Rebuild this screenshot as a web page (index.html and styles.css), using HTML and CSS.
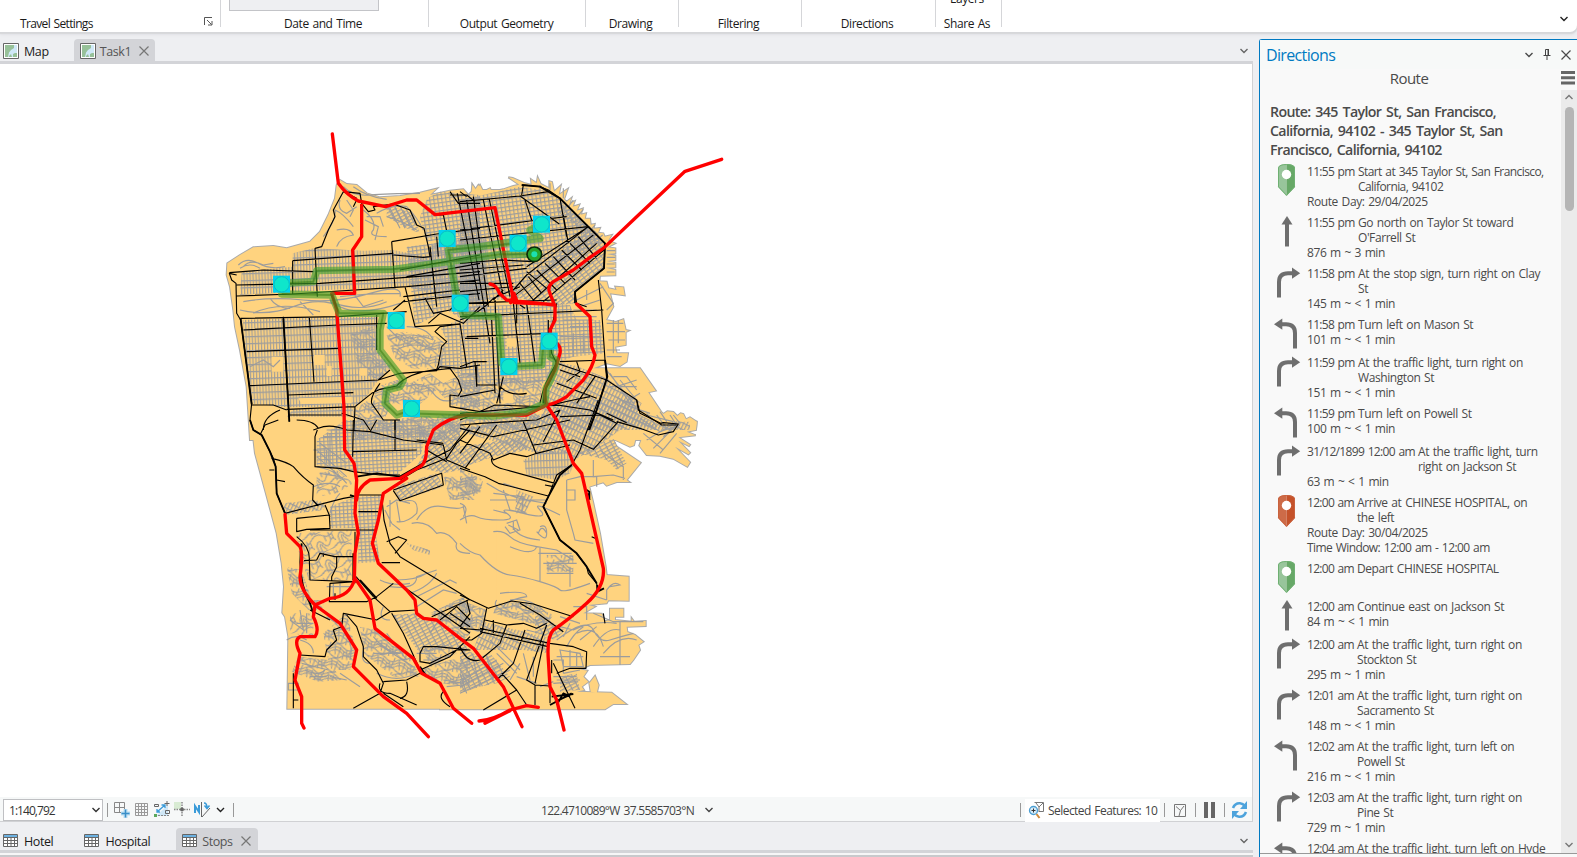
FILE: index.html
```html
<!DOCTYPE html>
<html lang="en">
<head>
<meta charset="utf-8">
<title>Route map</title>
<link rel="stylesheet" href="styles.css">
</head>
<body>
<svg class="defs" width="0" height="0">
  <defs>
    <symbol id="i-up" viewBox="0 0 32 32"><path class="ic" d="M17 31.500V8" /><path class="icf" d="M17 1l5.500 8.500h-11z"/></symbol>
    <symbol id="i-right" viewBox="0 0 32 32"><path class="ic" d="M9 31.500V16Q9 7.300 18 7.300H23"/><path class="icf" d="M22 1.600l8.200 5.700-8.200 5.500z"/></symbol>
    <symbol id="i-left" viewBox="0 0 32 32"><path class="ic" d="M25 31.500V16Q25 7.300 16 7.300H11"/><path class="icf" d="M12.300 1.600L4 7.300l8.300 5.500z"/></symbol>
    <symbol id="i-start" viewBox="0 0 32 32"><path fill="#98c59b" d="M8 3.500Q9 0 16.500 0V32L8 23z"/><path fill="#67a867" d="M16.500 0Q24 0 25 3.500V23L16.500 32z"/><path fill="none" stroke="#6fb072" d="M8.500 22.800V3.800Q9.500.500 16.500.500t8 3.300v19L16.500 31.300z"/><circle cx="16.500" cy="10.500" r="4.700" fill="#fff"/></symbol>
    <symbol id="i-stop" viewBox="0 0 32 32"><path fill="#cd6b48" d="M8 3.500Q9 0 16.500 0V32L8 23z"/><path fill="#c5522a" d="M16.500 0Q24 0 25 3.500V23L16.500 32z"/><path fill="none" stroke="#c9623e" d="M8.500 22.800V3.800Q9.500.500 16.500.500t8 3.300v19L16.500 31.300z"/><circle cx="16.500" cy="10.500" r="4.700" fill="#fff"/></symbol>
    <symbol id="i-map" viewBox="0 0 16 16"><path fill="#fff" stroke="#666" d="M.500.500h15v15H.500z"/><path fill="#cfe8f7" d="M2 2h12v12H2z"/><path fill="#97c199" d="M2 2h9v3L8 7 6 9.500 5 14H2zM10 14v-3l2-1h2v4zM6 13l2-2 1 3H6z"/></symbol>
    <symbol id="i-table" viewBox="0 0 16 14"><path fill="#fff" stroke="#666" d="M.500.500h14v12H.500z"/><path fill="#6cb1e1" d="M1 1h13v2.500H1z"/><path fill="none" stroke="#666" d="M1 3.500h13M1 6.500h13M1 9.500h13M4.500 4v8.500M8 4v8.500M11.500 4v8.500"/></symbol>
    <symbol id="i-x" viewBox="0 0 10 10"><path fill="none" stroke="currentColor" stroke-width="1.200" d="M.500.500l9 9M9.500.500l-9 9"/></symbol>
    <symbol id="i-chev" viewBox="0 0 8 6"><path fill="none" stroke="currentColor" stroke-width="1.400" d="M.500 1L4 4.500 7.500 1"/></symbol>

    <pattern id="g-west" width="9" height="21" patternUnits="userSpaceOnUse" patternTransform="rotate(-2)"><path class="st" d="M0 2H9M2 0V21"/></pattern>
    <pattern id="g-north" width="12" height="12" patternUnits="userSpaceOnUse" patternTransform="rotate(-8)"><path class="st" d="M0 2H12M2 0V12"/></pattern>
    <pattern id="g-soma" width="16" height="10" patternUnits="userSpaceOnUse" patternTransform="rotate(-38)"><path class="st" d="M0 2H16M2 0V10"/></pattern>
    <pattern id="g-mission" width="12" height="11" patternUnits="userSpaceOnUse" patternTransform="rotate(-3)"><path class="st" d="M0 2H12M2 0V11"/></pattern>
    <pattern id="g-bay" width="10" height="18" patternUnits="userSpaceOnUse" patternTransform="rotate(26)"><path class="st" d="M0 2H10M2 0V18"/></pattern>
    <pattern id="g-slope" width="10" height="18" patternUnits="userSpaceOnUse" patternTransform="rotate(62)"><path class="st" d="M0 2H10M2 0V18"/></pattern>
    <pattern id="g-hill" width="66" height="44" patternUnits="userSpaceOnUse" patternTransform="rotate(14)"><path class="st" d="M0 8Q16-5 33 8T66 8M0 17Q16 4 33 17T66 17M0 26Q16 13 33 26T66 26M0 36Q20 50 34 36T66 36M8 5L14 34M26 8l-3 32M44 12l8 30M60 0l-6 30M38 20v24"/></pattern>
    <pattern id="g-curl" width="70" height="60" patternUnits="userSpaceOnUse" patternTransform="rotate(-25)"><path class="st" d="M0 10Q20-4 35 12T70 10M6 60V34Q18 12 28 38Q36 54 48 38T66 40M15 60V40Q19 26 23 42L30 56M38 12V32M53 8v26M0 50Q36 70 70 50M62 14v20"/></pattern>

    <g id="land">
      <path d="M20 465L22 430 60 405 100 382 160 378 200 385 235 375 270 365 300 335 325 285 345 235 350 195 360 180 380 192 410 195 440 220 480 232 540 228 600 218 650 206 630 225 690 212 730 208 745 225 755 215 757 195 765 210 775 195 785 210 900 210V960H90L80 800 60 690 45 620 40 570 30 500z"/>
      <path transform="translate(720)" d="M0 225L40 225 38 195 50 212 60 195 70 215 90 205 95 215 130 208 160 198 178 194 145 172 158 174 195 190 215 195 213 178 230 190 233 172 242 192 268 205 268 184 276 186 282 215 302 197 296 225 323 207 312 238 320 245 334 234 328 252 344 244 338 260 358 254 350 272 368 266 362 284 378 280 374 296 390 296 392 314 404 312 400 326 420 324 414 338 430 340 434 350 455 345 444 362 465 370 442 382 466 385 466 400 440 402 466 407V420L440 423 466 428V442L436 443 466 450V466L420 467 418 484 440 485 445 505 470 510 466 500 490 502 494 526 450 520 460 560 438 600 468 606 490 598 497 630 506 632 497 636 497 675 465 680 470 700 504 700 500 725 480 738 440 730 400 745 540 745 587 812 550 820 548 840 558 865 582 862 595 870 610 882 622 874 640 876 652 888 662 880 670 882 678 898 690 892 710 905 708 925 600 910V960H0z"/>
      <path transform="translate(720 840)" d="M-60-60H540L620 60 710 65 708 90 680 95 707 106 655 112 690 134 687 138 655 122 690 158 685 163 645 140 690 187 682 200 640 176 600 167 560 165 538 137 548 108 528 110 522 136 510 140 458 116 470 140 542 188 500 240 508 246 470 246 440 257 430 247 388 260 400 310 420 400 437 500 440 525 506 530V602L445 601 440 610 385 615 405 620 370 640 425 641 435 664 450 660V626H490V650H465V660L515 665V655L522 665 557 663V678L500 680 502 696 525 705 550 725 535 735 540 750 520 780 510 792 390 795 360 808 382 812 370 830 385 845 365 860 372 870 350 875 455 878 498 912 460 912 435 928H-60z"/>
      <path transform="translate(30 900)" d="M60-30H800V866H172L175 650 165 590 157 578 162 500 155 430 140 340 105 210 75 100z"/>
      <path d="M1125 1668l11 27-6 25-18-5-4-25z"/>
    </g>
  </defs>
</svg>

<div class="app">
  <header class="ribbon">
    <div class="group g1"><span>Travel Settings</span>
      <svg class="launch" width="9" height="9" viewBox="0 0 9 9"><path fill="none" stroke="#555" d="M.500 8V.500H8M3 3l4.500 4.500M8 4v4H4"/></svg></div>
    <div class="group g2"><div class="datebox"></div><span>Date and Time</span></div>
    <div class="group g3"><span>Output Geometry</span></div>
    <div class="group g4"><span>Drawing</span></div>
    <div class="group g5"><span>Filtering</span></div>
    <div class="group g6"><span>Directions</span></div>
    <div class="group g7"><em>Layers</em><span>Share As</span></div>
    <svg class="collapse" width="8" height="6"><use href="#i-chev"/></svg>
  </header>

  <div class="work">
    <main class="left">
      <nav class="tabs">
        <div class="tab"><svg width="16" height="16"><use href="#i-map"/></svg><span>Map</span></div>
        <div class="tab active t-task"><svg width="16" height="16"><use href="#i-map"/></svg><span>Task1</span><svg class="x" width="10" height="10"><use href="#i-x"/></svg></div>
        <svg class="more" width="8" height="6"><use href="#i-chev"/></svg>
      </nav>
      <section class="mapframe">
        <svg class="map" width="1252" height="734" viewBox="-660 -168 3756 2202">
          <use href="#land" class="shore"/><use href="#land" class="ground"/>

          <!-- local street grids -->
          <g>
            <path fill="url(#g-west)" d="M65 455L218 440V400L280 385 430 392 520 390 620 410 640 370 780 340V560L560 500 320 510 60 525z"/>
            <path fill="url(#g-west)" d="M68 600L350 590 470 590 475 690 510 740 475 780 440 830 410 860 200 862 92 850z"/>
            <path fill="url(#g-north)" d="M622 235L660 215 780 225V340L620 365 600 290z"/>
            <path fill="url(#g-hill)" d="M390 640L460 620 475 700 515 740 480 780 420 760zM500 645l50-10 100 15 25 20-10 80-90-5-50-30-15-40zM470 800l60-20 40 10 60-30 40 30 60-30 50 0v100l-80 0-50-50-60 50-70-10-30 50-40-10z"/>
            <path fill="url(#g-slope)" d="M500 255L580 280 600 340 560 325 500 290z"/>
            <path fill="url(#g-north)" d="M560 380L800 350V610L730 600 680 570 600 610 585 615z"/>
            <path fill="url(#g-mission)" d="M660 620L720 600V820L730 790 700 750 655 745 680 660z"/>
            <path fill="url(#g-west)" d="M220 868L400 862V890L200 890z"/>
            <path fill="url(#g-hill)" d="M400 870L460 830 480 900 720 880V960H400z"/>
          </g>
          <g transform="translate(720)">
            <path fill="url(#g-north)" d="M0 240L180 200 260 212 310 240 430 365 180 500 150 540H0z"/>
            <path fill="url(#g-soma)" d="M150 530L390 320 440 375 432 445 350 510 345 550 290 555z"/>
            <path fill="url(#g-mission)" d="M0 560L290 550 330 555 350 600 420 600 435 700 340 710 300 725 250 790H0z"/>
            <path fill="url(#g-bay)" d="M260 760L300 728 350 738 440 775 545 850 530 880 600 915 640 905 690 905 690 930H240z"/>
            <path fill="url(#g-soma)" d="M300 245l120 100-20 10-110-80z"/>
            <path fill="url(#g-hill)" d="M0 790L100 780 250 770 240 840V930H0z"/>
          </g>
          <g transform="translate(720 840)">
            <path fill="url(#g-bay)" d="M-20 90L260 40 350 0 520 0 540 50 600 85 500 75 400 150 340 180 320 160 230 160z"/>
            <path fill="url(#g-soma)" d="M0 140L200 110 200 150 100 170 0 205z"/>
            <path fill="url(#g-west)" d="M190 180L240 155 330 150 345 185 330 220 290 240 200 225z"/>
            <path fill="url(#g-slope)" d="M350 160L460 115 500 190 470 210 440 180 400 170z"/>
            <path fill="url(#g-hill)" d="M0 205L70 240 60 280 0 290zM260 465h80v50h-80zM0 600L80 630 70 700 0 680zM110 610l90-5 80 40-20 30-50-5-110-30z"/>
            <path fill="url(#g-bay)" d="M70 665L270 715 265 760 190 750 40 750zM170 270l50 20-25 50-30 0z"/>
            <path fill="url(#g-slope)" d="M0 740L60 770 90 760 150 830 110 850 60 860 0 880zM300 830l50-10 10 50-60 5zM225 640l50 25 40 25-30 30-60-20z"/>
          </g>
          <g transform="translate(30 900)">
            <path fill="url(#g-mission)" d="M260 60L345 0H560L585 40 575 100 500 165 390 160 260 135z"/>
            <path fill="url(#g-soma)" d="M600 60L690 0V150L640 160 560 140zM490 200l130-40 20 40-130 42z"/>
            <path fill="url(#g-hill)" d="M560 0l130 0-90 80-30-20zM640 170l100 0v70l-80 0z"/>
            <path fill="url(#g-bay)" d="M160 250L255 240 290 250 280 270 165 285zM530 370l70 20v15l-50-15z"/>
            <path fill="url(#g-mission)" d="M385 230L455 225 435 330 450 425 385 430zM300 260l75-30v95l-75 0z"/>
            <path fill="url(#g-curl)" d="M200 340l165-10v150l-130 0-30-90zM180 580l70 0v70l-70-10zM260 160l60-10 50 40-50 30-60 10z"/>
            <path fill="url(#g-hill)" d="M170 440l45 10 30 90 40 0-10 30-40 0-50-50zM205 710l90 10 40 60-70 5-80-30zM280 640l70-60 30 120-20 50-60 0z"/>
            <path fill="url(#g-hill)" d="M390 620l45 10 100 70 35 70-80 0-90-70zM560 750l100-30 60-10v90l-90-10z"/>
            <path fill="url(#g-slope)" d="M485 585L560 580 640 610 720 690 640 680 570 700z"/>
            <path fill="url(#g-hill)" d="M580 690l70-20 30 30-80 40zM600 580l100-50 40 90-40 40z"/>
          </g>

          <!-- parks inside the grids -->
          <path class="park" d="M155 710h35v45h-35zM282 705h32v30h-32zM320 738h15v30h-15zM418 745h24v22h-24zM235 835l160-5v20l-150 2zM860 655h30v25h-30zM850 820h30v30h-30z"/>

          <!-- winding local roads -->
          <g class="minor">
            <path d="M55 435Q80 410 115 430T195 440M60 445Q90 425 120 445M70 440Q90 415 130 435L160 430M70 545Q150 530 250 540T450 520 540 530M60 570Q140 590 220 560T360 560 540 550M100 580Q180 540 300 575M330 545Q420 580 500 545M360 530Q440 520 540 520M240 545l40 40M150 535q20 30 60 30M400 520l30 40 60-20M370 200Q400 230 450 225T600 220M400 200Q440 230 500 238M310 350Q350 300 345 270 370 280 400 320M350 330Q390 320 400 345 360 350 350 380M360 240q-10 30 20 40l30-20M430 270Q470 300 460 330 440 350 500 350M435 300l40 20-10 40M470 280Q520 250 560 260 590 290 610 330M510 265l30 60M525 260l30 65M540 258l30 60M555 262l30 50M500 290Q540 300 590 330M440 290l40 0 10 30M380 240l20 30-10 20M500 620l40 40 30-10 40 30"/>
            <path d="M90 740l40-20 30 20 20-20M510 660Q560 630 640 660M530 690Q580 660 650 690M560 620q60 0 80 40M690 810q40 30 60 10M560 800q50-20 80 20t80 10"/>
          </g>
          <g class="minor" transform="translate(720)">
            <path d="M350 540L430 500M360 560l60-20M420 490l40 60-20 20M380 510v30M440 610l50 0M440 635h55M445 660h50M440 690h40M440 710h45M460 600v100M475 600v70M435 745L520 850M460 770h40l30 40M470 800l60-20M470 830l40 30 60 20M560 885l80 20M600 875l20 30M640 885l20 25M300 650h120M310 600h90M320 690h70M340 640v70M370 640v60M180 790q-30-30-30 10M20 770q40-20 40 10M450 760l60 90M480 780l50 60M450 800h80M490 850l50-30M340 590h70M340 570h70M330 620h80"/>
            <path d="M240 195V215M270 190v20M310 205v30M340 240l-15 20M370 268l-15 18M440 392h26M440 412h26M440 432h24M440 456h24M405 315l-15 18M428 345l-18 14"/>
          </g>
          <g class="minor" transform="translate(720 840)">
            <path d="M0 360Q30 340 50 350T120 360 140 340 190 340 240 330 300 345M0 310Q30 320 10 350M0 430Q30 460 60 465 110 520 150 525T240 545 300 570 390 550M100 395Q130 390 150 410T230 440 290 450 340 480M140 370l30-10 10 30-30 10-15-20M160 365v25M145 375l30 15M150 440Q220 470 230 440M240 380q20-10 20 20t-30-5M235 400q10-30 25 0M130 270L150 330 200 340M100 280l90 10-5 50M130 250l60 20M320 240V330L340 400 345 420 400 430M320 270h25v30h-25M320 240l40-10 50 0v30M240 440Q240 500 240 545M235 460h100M250 490h100M260 520h80M330 500v60M100 330l40 10M160 385q20 30 80 35M80 250q60 40 120 50l60 10M90 300h170M540 55l60 40 60-20M560 40l30 40M590 45l30 40M630 45l20 30"/>
            <path d="M120 580Q200 570 200 590 140 600 130 620M150 600Q210 590 260 640M170 620q40 20 60 10M110 600q-20 30 60 40M300 680L340 690Q400 660 470 670M290 720Q380 650 400 690T450 720 520 700M300 750l60 10 10 40-60 0zM330 750v50M350 760v40M290 770h80M400 740Q440 680 480 690M430 760Q480 700 530 720M420 770h90M280 780h30v40M370 680q-30 20-50 60M480 665v130M440 600V570Q460 540 480 555L450 560M380 580l60 20M560 120l90-55M580 145l80-80M550 100l60 50M610 110l30-30M600 160l50-60M340 620h40v40M400 640l60 25h90M400 180v50l60-5 35 10M420 150q50 40 70 50v40M300 650l60 20M330 670l-20 40M310 820l50-10M290 840h70M350 700q60-30 80 40M360 720l50-40"/>
            <path d="M90 720l90 90M0 880L150 810M0 860l130-70M0 845l110-65M20 880l-20-60M60 860l-20-80M100 840l-20-70M190 760l20 80M170 830l60 20M280 830l70 0M280 850l70-5M240 860l40-15M200 690l60 15M110 760l60 60M180 790l-30 50M220 770v60"/>
          </g>
          <g class="minor" transform="translate(30 900)">
            <path d="M520 245Q570 230 560 280 530 310 500 305M560 300Q590 250 640 260T700 260L710 310M545 310Q590 300 620 340 650 330 680 370 670 400 720 400M485 310l25 20M250 200Q300 180 330 200M270 160l60 10M260 140Q320 150 350 190M330 220q-20 20-30 60M260 90l90 80M260 110l60 50M270 70l80 60M480 500Q560 510 560 470L620 450M540 520Q600 500 620 460M560 530L660 480 680 490M500 480q60 0 90-20M560 560l80-50 40 10M600 640l40-60M460 560Q440 600 480 600M180 600l40 30-10-60M170 660Q200 640 230 660M215 730l80 20M225 750q40 20 60 0M240 770h50M350 640q20 40 10 80M430 650q40 50 90 50M440 670l110 70M430 700h80M470 640l60 80M470 260l30-20 40 10M480 240v80M465 270l20 40M500 245l10 60M470 450l60 60M450 480q40 20 90 10"/>
            <path d="M175 790h30v20h-30zM290 30h50M280 50h60M250 90h40v40M300 40v100M320 20v110M560 700h60M580 720h60M400 690q-10 40 20 40M440 760q60 30 120 0M640 780l60 10M650 800l50-5M290 500h70M310 490v50M330 490v40M290 590l30 20M210 660q40 10 40 40M200 610h50M230 580v60M330 760l60 40M300 770l50 10"/>
          </g>

          <!-- arterials -->
          <g class="major">
            <path d="M50 465L28 460 35 480 48 490 50 580 62 600 95 850 90 900M28 458L130 450 280 455M50 495L300 490 520 475 780 455M50 528L220 522 560 500 780 480M218 422V522M218 422L520 400M285 385L292 530M285 385L305 380 325 330 345 290 340 270 370 215 420 220 425 250M370 215L410 235M400 260l10-20M425 250L445 275 465 270 460 260 520 252 570 270 590 315 612 325 625 380 630 410 610 412 520 405M515 365L650 342 780 325M515 365L525 505M648 285L670 285 690 380M690 215l25 35 65 0M712 220l65 320M690 225h50l25 20M630 380L650 560M655 410L650 350M560 470L780 430M540 450L780 405M555 500L585 620 720 612M550 530L720 510M550 545L780 520M780 560L730 610 660 580 625 610M615 535L640 580 690 570 730 530M520 570L555 540"/>
            <path d="M62 600V595L355 590 560 575M70 630L355 615 500 610M80 695L360 685M90 797L475 780 540 760 650 752 660 740 720 745M190 590L208 905M268 590L282 785M205 825L400 818M200 868L405 860 455 820 480 808 530 798M95 855L160 855 200 870M180 870Q130 890 130 930M205 885h160M405 860L402 930M365 880L430 900 450 930M470 580V690M475 780L510 750M480 790Q450 830 455 850L490 900 540 900M530 798Q560 760 650 748L655 735 665 680 680 665 645 635 660 620 720 612M650 750L690 745 715 780 725 810 715 828 690 825 690 860 780 875M720 610L740 740M735 655h40M720 745l60-10M770 735v65M525 900v30"/>
            <path class="thick" d="M62 597L95 853M190 595L208 905"/>
          </g>
          <g class="major" transform="translate(720)">
            <path d="M0 245L180 228 265 215M0 330L210 303 320 290M40 230L85 560M70 240L130 530M88 238L150 530M20 240l70 430M180 228L298 312M195 240L215 300M185 225L190 195 240 200 265 210 300 235 435 370M300 235L320 350M0 215l20 15M0 360L385 320M0 430L120 420 220 425M0 450L190 435M0 470L200 445M0 490L160 490M0 515L160 500M310 285L325 370M200 440L385 320M160 510L200 465 385 320 435 370 432 445 345 515 350 550 380 560M180 490l40 50M205 470l40 50M230 450l60 60M255 430l60 60M280 410l65 70M305 390l60 60M330 370l60 60M355 350l55 65M200 455l60 50M220 540L410 370M160 530L400 345M250 545L432 390M0 600Q60 580 100 535L180 500M100 540l30-30M105 540L120 850M95 600l10 220M160 550L180 730M200 550L225 730M0 590L430 570M20 650L270 640M0 740l40-15 40 0M45 725l5 70 60 0M0 550L290 540M180 555l15 10M170 530v80M265 600v50M290 550L270 650 275 700 290 730M415 480L425 570 435 720 440 775 410 870 385 930M300 725L435 720M290 730Q250 790 240 850M290 730L440 780 530 840 535 870 605 915 650 915M290 790L410 835M350 725l10 30-40 30M300 750l60 20M405 770L350 850M120 800Q150 830 200 820M105 855L240 860M0 880L240 860M260 850L390 870 460 900M250 860L340 840 390 830M0 900L105 855M110 850l20-80M300 890L420 885 470 910M0 830L105 810"/>
            <path class="thick" d="M185 195L240 200 300 235 435 370 432 445 345 515V550M435 720L442 770 410 870 388 930M290 730Q250 800 250 850"/>
          </g>
          <g class="major" transform="translate(720 840)">
            <path d="M0 75L60 70 230 60 300 30M0 85L100 110 330 60M110 75L15 205M60 80L0 160M0 120L90 160 100 180 150 160 200 170 230 160 330 135M190 65L228 160M220 135L340 120 400 148 475 65M250 125L300 30M95 175Q90 200 140 210L285 250M0 205L75 230 115 250 265 288M415 0L360 150 335 195 290 225 265 290 250 320 300 420 350 460 380 500 385 520 410 550 412 565M470 65L540 85 595 105 640 95 655 72 610 68 602 70 540 40 530 0M440 40L500 68M0 585L85 625 155 603 220 612 340 650M180 610L240 645 310 695M60 685L270 730M60 695L265 740M0 685L65 690M20 600L30 640 0 680M80 625L65 700 35 720 0 720M75 660L140 675 190 670 230 685 260 670M140 675L120 730 60 780Q20 790 0 740M195 690L160 790 110 840M100 660v40M260 675Q230 760 200 840L225 855 270 858M250 730L225 850M270 730L340 740 380 755 378 805 330 805 290 820M280 790l65 135M275 780v40M125 820L170 870 200 915M170 870L70 930M225 855V915M270 850v60M430 640l5 30M255 255l25 5M385 280l5 20M395 410l10 5M0 290"/>
            <path class="thick" d="M335 195L300 225 265 290 250 320 300 420 350 460 380 500 410 550M412 555v20l20-10M270 915l65-35M275 890l65-8M290 915l20-35 20 10M285 905l45-20M380 270l8 5v20"/>
          </g>
          <g class="major" transform="translate(30 900)">
            <path d="M60 0L70 30 95 45 120 95 130 115 137 140 140 220 165 280 340 235 370 230M90 45L105 15 145 0M125 115Q170 125 190 140 220 175 250 195L248 240 265 258M118 150h15M140 180l25 5M250 30L265 25Q250 0 200 0M262 30L255 50V140L330 145 370 155 450 165 510 165M265 25Q300 10 350 30L420 35 520 60 640 75 650 120 720 150M420 35L440 0M370 0L368 110M370 95L560 90M495 0V90M720 15L660 90 580 130 510 175M720 30L680 70 650 115 560 150 510 180M590 90L650 125M560 60L640 70M490 210L635 160 640 195 510 242 490 212M385 225L455 225 462 300 480 370 510 410 690 520 720 540M385 275h60M200 295L298 285 300 325 230 328 200 335V295M285 255l15 35M240 330L440 330M375 335V490M200 350Q240 380 238 420L240 480 370 485M222 422L260 420 270 400 315 410 370 410M280 400v10M320 410v30l-15 30 0 15M375 485L300 490 298 545 410 545 440 530 490 490M378 470L430 530 480 575 440 600 340 580 335 620 310 630 320 660 290 690 285 710 210 705M480 575L560 570M485 580L520 640 570 750M470 365L505 350 530 360 495 400M455 428L510 428M520 500L620 570 720 640M605 590L715 540M630 600L680 560 720 600M660 580L720 620M570 700L580 680 620 680 720 690 680 690 600 730 570 725 570 700M570 750L660 710 720 650M350 585L380 620 400 680 400 710 440 750 460 790 450 820 370 865M460 785L530 780 570 760M450 790Q440 820 480 820L560 855M530 785Q540 830 510 835M460 820L520 860M190 760V865M205 840h-15M315 540V520M240 570L300 600M640 815Q620 835 660 860"/>
            <path class="thick" d="M60 0L70 30 95 45 120 95 137 140 140 220 165 280M380 170L440 160 510 170 580 130M215 370Q200 480 240 550L250 580M370 400V480M375 230l-15-5M570 740l20 30M390 480l50 55"/>
          </g>

          <!-- freeways -->
          <g class="freeway">
            <path d="M337 42L355 190Q380 225 415 243L497 260 560 240H590L645 284 825 263 882 548 995 553M425 245V350L398 390 404 520H335L350 570 372 860 374 990 385 1005 402 1030 410 1080 405 1180 415 1240 405 1300 403 1380M1505 118L1395 154 1250 290 1150 385 1110 412 1060 450 1000 485Q980 500 990 520L1005 560V600L990 630 993 660Q1025 670 1020 700L1005 750 978 800Q970 820 980 855M810 492Q830 495 838 520L860 540 1005 555M872 548l10-28 10 28M1070 552L1110 590 1115 680 1125 705Q1120 740 1090 780L1040 830Q1010 850 980 855"/>
            <path d="M980 855Q960 865 920 885L790 885 740 885Q690 890 640 930L620 980Q620 1030 600 1040L540 1075 450 1080Q410 1105 410 1140M980 855L1010 900 1060 1030 1085 1060 1150 1345Q1155 1400 1100 1450T1000 1530Q980 1550 985 1620L990 1700 1010 1740 1032 1830M560 1075L490 1120 475 1200 457 1270 475 1330 560 1410 585 1440 590 1480 610 1495 650 1500 720 1555 760 1585 850 1700 906 1820"/>
            <path d="M405 1375L450 1440 465 1525 580 1615 605 1660 660 1690 700 1765 755 1810M405 1375Q390 1430 330 1435L285 1455M195 1183L200 1240 240 1280Q250 1300 240 1370 240 1410 285 1455L360 1510 410 1590 400 1640 490 1730 560 1780 625 1850M285 1455L280 1490Q300 1530 285 1550L240 1550Q220 1560 240 1600L225 1680 245 1730V1810L252 1824M777 1803Q820 1800 870 1770L920 1757 955 1762M795 1810L870 1772"/>
          </g>

          <!-- solved route -->
          <g class="route">
            <path d="M943 403L840 403 600 437 520 448 290 452 280 485 190 490M185 522L335 525 358 580 490 580 480 630 480 690 550 780 540 800 500 810 495 850 530 885 575 870M560 880L720 885 820 888 920 875 975 850 978 805Q1010 750 1008 720L990 710 992 670M970 675L965 735 870 740 845 730 835 590 730 585 710 530 685 390 780 380 960 355 930 330 960 315"/>
          </g>
          <g class="routecore">
            <path d="M943 403L840 403 600 437 520 448 290 452 280 485 190 490M185 522L335 525 358 580 490 580 480 630 480 690 550 780 540 800 500 810 495 850 530 885 575 870M560 880L720 885 820 888 920 875 975 850 978 805Q1010 750 1008 720L990 710 992 670M970 675L965 735 870 740 845 730 835 590 730 585 710 530 685 390 780 380 895 370"/>
          </g>

          <g class="stop">
            <g transform="translate(185 493)"><path d="M-26-26h51v51h-51z"/><circle r="23"/></g>
            <g transform="translate(682 356)"><path d="M-26-26h51v51h-51z"/><circle r="23"/></g>
            <g transform="translate(529 602)"><path d="M-26-26h51v51h-51z"/><circle r="23"/></g>
            <g transform="translate(721 550)"><path d="M-26-26h51v51h-51z"/><circle r="23"/></g>
            <g transform="translate(575 866)"><path d="M-26-26h51v51h-51z"/><circle r="23"/></g>
            <g transform="translate(895 370)"><path d="M-26-26h51v51h-51z"/><circle r="23"/></g>
            <g transform="translate(965 313)"><path d="M-26-26h51v51h-51z"/><circle r="23"/></g>
            <g transform="translate(988 664)"><path d="M-26-26h51v51h-51z"/><circle r="23"/></g>
            <g transform="translate(867 740)"><path d="M-26-26h51v51h-51z"/><circle r="23"/></g>
          </g>
          <g class="depot" transform="translate(943 403)"><circle r="22"/><circle r="9"/></g>
        </svg>
      </section>

      <footer class="status">
        <div class="scale"><span>1:140,792</span><svg width="8" height="6"><use href="#i-chev"/></svg></div>
        <i class="sep s1"></i>
        <svg class="tools" width="98" height="18" viewBox="0 0 98 18">
          <path fill="none" stroke="#888" d="M.500 1.500h10v10H.500zM5.500 1v11M0 6.500h11"/><path stroke="#b8dcf2" stroke-width="4" d="M11.500 8v9M7 12.500h9"/><path stroke="#3a8fc8" stroke-width="1.500" d="M11.500 8.500v8M7.500 12.500h8"/>
          <path fill="none" stroke="#999" d="M21.500 2.500h12v12h-12zM24.500 2v13M27.500 2v13M30.500 2v13M21 5.500h13M21 8.500h13M21 11.500h13"/>
          <path fill="#cfe7f6" d="M42 15L54 4v11z"/><path stroke="#3a9bd9" stroke-width="1.300" fill="none" d="M43 11l8-7M47.500 4H51v3M43 8v3h3"/><path stroke="#666" fill="none" d="M40.500 3.500h4v2h-4zM50.500 2.500h5M53 0v5M51.500 9.500h4v3h-4z"/><path stroke="#888" stroke-dasharray="2 1" d="M44 14.500h12"/><path fill="#5ca85c" d="M40 13h3v3h-3z"/>
          <path fill="#d8ebd3" d="M60 1h7v7h-7z"/><path stroke="#888" stroke-width="1.500" stroke-dasharray="1.500 1" d="M68 1v15M60 8.500h16"/><circle cx="68" cy="8.500" r="2" fill="#666"/>
          <path fill="none" stroke="#3a9bd9" stroke-width="2" d="M81 12V5l4 6V4"/><path stroke="#666" d="M87.500 1v15M88 16l8-9"/><path fill="none" stroke="#3a9bd9" stroke-width="1.500" d="M90 2q3 0 3 5M90.500 4.500L93 7.500l2.500-3"/>
        </svg>
        <svg class="c1" width="9" height="6"><use href="#i-chev"/></svg>
        <i class="sep s2"></i>
        <div class="coord"><span>122.4710089°W 37.5585703°N</span><svg width="10" height="6"><use href="#i-chev"/></svg></div>
        <i class="sep s3"></i>
        <div class="sel"><svg width="17" height="18" viewBox="0 0 17 18"><path fill="#fff" stroke="#777" d="M6.500 1.500h9v9h-5M8 2l3 4 4-4M11 6v4"/><circle cx="5.500" cy="9.500" r="4" fill="#d7ecf9" stroke="#4c9fd3" stroke-width="1.300"/><path stroke="#333" d="M3.500 9.500h4M5.500 7.500v4"/><path stroke="#d08a3c" stroke-width="2" d="M8.500 13l3 4"/></svg><span>Selected Features: 10</span></div>
        <i class="sep"></i>
        <svg class="chart" width="12" height="13" viewBox="0 0 12 13"><path fill="none" stroke="#777" d="M.500.500h11v12H.500zM2 2.500l4.500 4L10 2M6.500 6.500L5 12"/></svg>
        <i class="sep"></i>
        <svg class="pause" width="11" height="16"><path fill="#666" d="M0 0h4v16H0zM7 0h4v16H7z"/></svg>
        <i class="sep"></i>
        <svg class="refresh" width="17" height="18" viewBox="0 0 17 18"><path fill="none" stroke="#4da3dc" stroke-width="2.600" d="M2 7Q4 2 9 2.300q3 .2 5 3M15 11q-2 5-7 4.700-3-.2-5-3"/><path fill="#4da3dc" d="M16 0v8H9zM1 18v-8h7z"/></svg>
      </footer>

      <nav class="tabs lower">
        <div class="tab"><svg width="16" height="14"><use href="#i-table"/></svg><span>Hotel</span></div>
        <div class="tab t-hosp"><svg width="16" height="14"><use href="#i-table"/></svg><span>Hospital</span></div>
        <div class="tab active t-stops"><svg width="16" height="14"><use href="#i-table"/></svg><span>Stops</span><svg class="x" width="10" height="10"><use href="#i-x"/></svg></div>
        <svg class="more" width="8" height="6"><use href="#i-chev"/></svg>
      </nav>
      <div class="tabletop"></div>
    </main>

    <aside class="panel">
      <div class="phead"><h1>Directions</h1>
        <svg width="8" height="6"><use href="#i-chev"/></svg>
        <svg class="pin" width="8" height="11" viewBox="0 0 8 11"><path fill="none" stroke="#444" d="M2.500 6V.500H5.500V6M.500 6.500h7M4 7v4"/><path fill="#444" d="M4.500 0h1.500v6H4.500z"/></svg>
        <svg width="10" height="10"><use href="#i-x"/></svg>
      </div>
      <div class="sub"><span>Route</span><svg width="14" height="14"><path fill="#666" d="M0 0h14v3H0zM0 5.300h14v3H0zM0 10.600h14v3H0z"/></svg></div>
      <div class="pbody">
        <div class="list">
          <h2>Route: 345 Taylor St, San Francisco,<br>California, 94102 - 345 Taylor St, San<br>Francisco, California, 94102</h2>
          <div class="step"><svg><use href="#i-start"/></svg><div><p><b>11:55 pm</b><span class="snug">Start at 345 Taylor St, San Francisco,<br>California, 94102</span></p><p>Route Day: 29/04/2025</p></div></div>
          <div class="step"><svg><use href="#i-up"/></svg><div><p><b>11:55 pm</b><span>Go north on Taylor St toward<br>O'Farrell St</span></p><p>876 m ~ 3 min</p></div></div>
          <div class="step"><svg><use href="#i-right"/></svg><div><p><b>11:58 pm</b><span>At the stop sign, turn right on Clay<br>St</span></p><p>145 m ~ &lt; 1 min</p></div></div>
          <div class="step"><svg><use href="#i-left"/></svg><div><p><b>11:58 pm</b><span>Turn left on Mason St</span></p><p>101 m ~ &lt; 1 min</p></div></div>
          <div class="step"><svg><use href="#i-right"/></svg><div><p><b>11:59 pm</b><span>At the traffic light, turn right on<br>Washington St</span></p><p>151 m ~ &lt; 1 min</p></div></div>
          <div class="step"><svg><use href="#i-left"/></svg><div><p><b>11:59 pm</b><span>Turn left on Powell St</span></p><p>100 m ~ &lt; 1 min</p></div></div>
          <div class="step"><svg><use href="#i-right"/></svg><div><p><b class="long">31/12/1899 12:00 am</b><span>At the traffic light, turn<br>right on Jackson St</span></p><p>63 m ~ &lt; 1 min</p></div></div>
          <div class="step"><svg><use href="#i-stop"/></svg><div><p><b class="am">12:00 am</b><span>Arrive at CHINESE HOSPITAL, on<br>the left</span></p><p>Route Day: 30/04/2025</p><p class="snug">Time Window: 12:00 am - 12:00 am</p></div></div>
          <div class="step"><svg><use href="#i-start"/></svg><div><p><b class="am">12:00 am</b><span>Depart CHINESE HOSPITAL</span></p></div></div>
          <div class="step"><svg><use href="#i-up"/></svg><div><p><b class="am">12:00 am</b><span>Continue east on Jackson St</span></p><p>84 m ~ &lt; 1 min</p></div></div>
          <div class="step"><svg><use href="#i-right"/></svg><div><p><b class="am">12:00 am</b><span>At the traffic light, turn right on<br>Stockton St</span></p><p>295 m ~ 1 min</p></div></div>
          <div class="step"><svg><use href="#i-right"/></svg><div><p><b class="am">12:01 am</b><span>At the traffic light, turn right on<br>Sacramento St</span></p><p>148 m ~ &lt; 1 min</p></div></div>
          <div class="step"><svg><use href="#i-left"/></svg><div><p><b class="am">12:02 am</b><span>At the traffic light, turn left on<br>Powell St</span></p><p>216 m ~ &lt; 1 min</p></div></div>
          <div class="step"><svg><use href="#i-right"/></svg><div><p><b class="am">12:03 am</b><span>At the traffic light, turn right on<br>Pine St</span></p><p>729 m ~ 1 min</p></div></div>
          <div class="step"><svg><use href="#i-left"/></svg><div><p><b class="am">12:04 am</b><span>At the traffic light, turn left on Hyde</span></p></div></div>
        </div>
        <div class="scroll"><svg class="up" width="8" height="6"><use href="#i-chev"/></svg><div class="thumb"></div><svg class="down" width="8" height="6"><use href="#i-chev"/></svg></div>
      </div>
    </aside>
  </div>
</div>
</body>
</html>
```
FILE: styles.css
```css
* { box-sizing: border-box; }
body { margin: 0; width: 1577px; height: 857px; overflow: hidden; background: #eeeff2; font: 12px/15px "Open Sans", "Noto Sans", sans-serif; color: #1a1a1a; letter-spacing: -0.42px; word-spacing: 1px; }
.defs { position: absolute; }
svg { display: block; flex: none; }
h1, h2, p { margin: 0; font-weight: 400; }
.app { display: flex; flex-direction: column; height: 857px; }

.ribbon { flex: none; height: 32px; background: #fff; display: flex; border-radius: 0 0 7px 0; box-shadow: 0 1px 1px 1px #d6d7da, 0 3px 3px #e2e3e6; position: relative; }
.group { height: 27px; border-right: 1px solid #d5d6d9; display: flex; flex-direction: column; align-items: center; justify-content: flex-end; padding-right: 3px; }
.group span { line-height: 18px; height: 12px; white-space: nowrap; }
.g1 { width: 221px; flex-direction: row; align-items: flex-end; justify-content: space-between; padding: 0 7px 0 20px; letter-spacing: -0.65px; }
.launch { margin-bottom: 1px; }
.g2 { width: 208px; }
.g3 { width: 157px; padding-right: 1px; }
.g4 { width: 93px; }
.g5 { width: 123px; }
.g6 { width: 134px; }
.g7 { width: 66px; }
.g7 em { font-style: normal; line-height: 15px; margin-bottom: 9px; }
.datebox { width: 150px; height: 11px; background: #eeeff2; border: 1px solid #c3c4c8; border-top: 0; margin-bottom: 4px; margin-right: 38px; }
.collapse { margin: 16px 9px 0 auto; color: #222; }

.work { flex: 1; display: flex; min-height: 0; }
.left { width: 1253px; display: flex; flex-direction: column; padding-top: 7px; }
.tabs { height: 25px; border-bottom: 3px solid #d3d4d8; display: flex; align-items: stretch; font-size: 12.5px; letter-spacing: -0.4px; }
.tab { display: flex; align-items: center; padding-left: 3px; gap: 5px; height: 22px; padding-top: 2px; white-space: nowrap; }
.tab span { padding-top: 1px; }
.tab.active { background: #d3d4d8; color: #555; border-radius: 4px 4px 0 0; padding-left: 6px; gap: 4px; }
.tab .x { color: #777; }
.t-task { width: 81px; margin-left: 25px; }
.t-task .x { margin-left: 4px; }
.more { margin: 9px 5px 0 auto; color: #666; }
.mapframe { height: 734px; background: #fff; border-right: 1px solid #d0d1d4; overflow: hidden; }
.map { display: block; }

.st { fill: none; stroke: #9c9c9c; stroke-width: 3.4; }
.shore { fill: #ffd37f; stroke: #aaa; stroke-width: 6; }
.ground, .park { fill: #ffd37f; }
.minor { fill: none; stroke: #9c9c9c; stroke-width: 3.5; }
.major { fill: none; stroke: #000; stroke-width: 3.4; stroke-linejoin: round; }
.major .thick { stroke-width: 5.5; }
.freeway { fill: none; stroke: #f00; stroke-width: 10; stroke-linejoin: round; stroke-linecap: round; }
.route { fill: none; stroke: #3fa02c; stroke-opacity: .62; stroke-width: 22; stroke-linejoin: round; stroke-linecap: round; }
.routecore { fill: none; stroke: #1f6a00; stroke-opacity: .4; stroke-width: 6; stroke-linejoin: round; }
.stop path { fill: #00d2f0; }
.stop circle { fill: #0fe6cb; stroke: #08bfc4; stroke-width: 3; }
.depot circle:first-child { fill: #2aa32a; stroke: #0a2a0a; stroke-width: 5; }
.depot circle:last-child { fill: #1ce0b0; }

.status { height: 25px; background: #f6f8f8; border: solid #d0d1d4; border-width: 0 1px 1px 0; display: flex; align-items: center; padding: 2px 0 0 3px; }
.status span { padding-top: 1px; }
.scale { width: 100px; height: 22px; border: 1px solid #bfc0c3; background: #fff; display: flex; align-items: center; justify-content: space-between; padding: 0 2px 0 5px; letter-spacing: -0.95px; color: #333; }
.sep { width: 1px; height: 14px; background: #999; flex: none; }
.s1 { margin-left: 4px; }
.tools { margin-left: 6px; margin-top: -1px; }
.c1 { margin-left: 4px; color: #222; }
.s2 { margin-left: 8px; }
.coord { display: flex; align-items: center; gap: 10px; margin-left: 307px; width: 174px; white-space: nowrap; color: #444; letter-spacing: -0.72px; word-spacing: 1.5px; }
.s3 { margin-left: 305px; }
.sel { background: #fff; height: 23px; width: 135px; margin: 0 4px; padding-left: 3px; display: flex; align-items: center; gap: 3px; white-space: nowrap; color: #444; letter-spacing: -0.55px; }
.chart { margin: 0 9px; }
.pause { margin: 0 9px 0 8px; }
.refresh { margin-left: 6px; }
.lower { margin-top: 6px; height: 25px; }
.lower .tab { padding-top: 3px; }
.lower .more { margin-top: 10px; }
.t-hosp { margin-left: 28px; }
.t-stops { width: 82px; margin-left: 26px; }
.t-stops .x { margin-left: 4px; }
.tabletop { height: 4px; background: #f6f6f7; border-bottom: 2px solid #c8c9cc; }

.panel { margin: 7px 0 0 6px; width: 318px; border: solid #0079c1; border-width: 1px 0 0 1px; border-top-left-radius: 3px; background: #f9f9f9; display: flex; flex-direction: column; color: #4a4a4a; }
.phead { height: 29px; background: #f7f9f8; display: flex; align-items: center; padding: 0 6px 0 6px; gap: 10px; }
.phead h1 { flex: 1; font-size: 16px; line-height: 20px; color: #007ac2; letter-spacing: -0.65px; }
.sub { height: 19px; display: flex; align-items: center; padding-right: 2px; margin-bottom: 2px; }
.sub span { flex: 1; text-align: center; font-size: 15px; letter-spacing: -0.5px; padding-right: 3px; }
.sub svg { margin-top: -2px; }
.pbody { flex: none; height: 764px; display: flex; border-bottom: 1px solid #999; }
.list { width: 301px; overflow: hidden; }
.list h2 { font-size: 14.2px; line-height: 19px; font-weight: 600; letter-spacing: -0.65px; word-spacing: 1.8px; padding: 12px 0 5px 10px; white-space: nowrap; }
.step { display: flex; gap: 5px; margin: 0 0 6px 10px; min-height: 32px; white-space: nowrap; }
.step > svg { width: 32px; height: 32px; }
.step p { display: flex; }
.step b { font-weight: 400; width: 51px; letter-spacing: -0.7px; }
.step b.am { width: 50px; }
.step b.long { width: 111px; letter-spacing: -0.65px; }
.step .snug { letter-spacing: -0.58px; }
.ic { fill: none; stroke: #6e6e6e; stroke-width: 4; }
.icf { fill: #6e6e6e; }
.scroll { width: 16px; background: #ebebeb; display: flex; flex-direction: column; align-items: center; color: #777; }
.up { transform: rotate(180deg); margin: 4px 0 7px; }
.thumb { width: 9px; height: 104px; border-radius: 5px; background: #b5b5b5; }
.down { margin: auto 0 5px; }
```
